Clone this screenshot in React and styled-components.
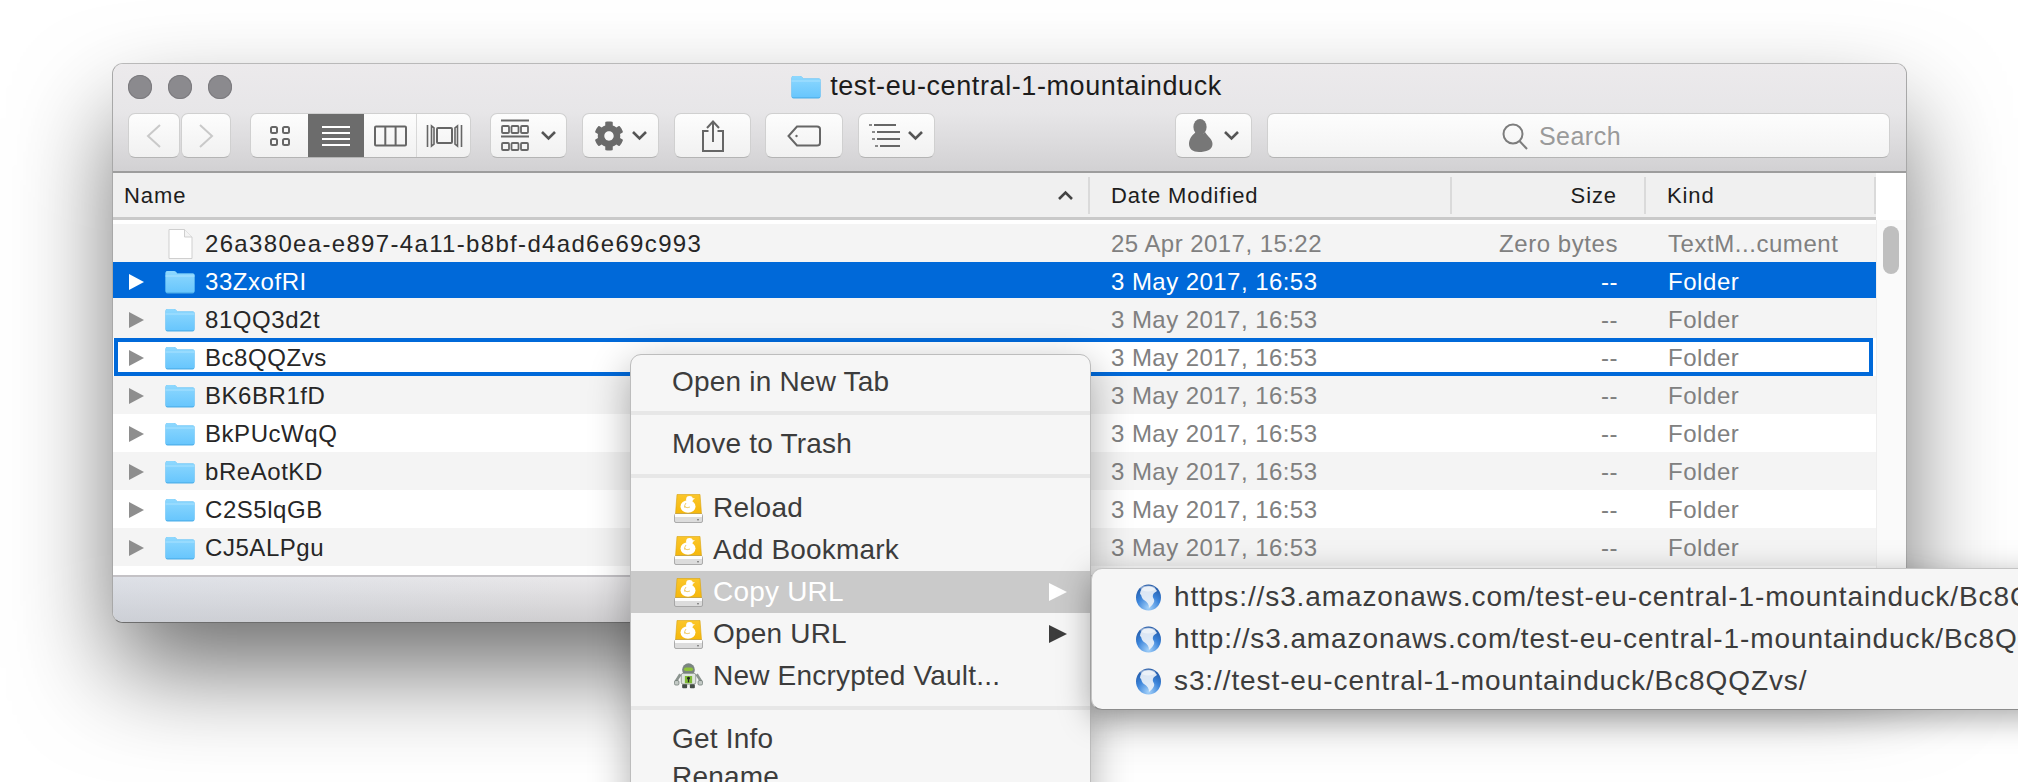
import React from "react";
import styled, { createGlobalStyle } from "styled-components";
import { FaCog } from "react-icons/fa";

const Global = createGlobalStyle`
  html, body { margin: 0; padding: 0; background: #fff; }
  #root { width: 2018px; height: 782px; overflow: hidden; }
`;

const Page = styled.div`
  position: relative; width: 2018px; height: 782px; overflow: hidden;
  padding: 63px 0 0 112px; box-sizing: border-box; background: #fff;
  font-family: "Liberation Sans", Arial, sans-serif;
`;
const Win = styled.div`
  width: 1795px; height: 560px; box-sizing: border-box; display: flex; flex-direction: column;
  border: 1px solid #a8a8a8; border-top-color: #b9b9b9; border-bottom-color: #6d6d6d;
  border-radius: 11px; overflow: hidden; background: #fff;
  box-shadow: 0 50px 100px -5px rgba(0,0,0,.58);
`;
const Chrome = styled.div`
  flex: none; height: 109px; box-sizing: border-box; border-bottom: 2px solid #9d9d9d;
  background: linear-gradient(#eceaec, #e7e6e8 45%, #d2d1d3);
  display: flex; flex-direction: column;
`;
const TitleRow = styled.div`
  height: 49px; flex: none; display: grid; grid-template-columns: 1fr auto 1fr; align-items: center; padding: 0 15px 4px; box-sizing: border-box;
`;
const Lights = styled.div`display: flex; gap: 16px;`;
const Light = styled.span`
  width: 24px; height: 24px; border-radius: 50%; background: #8b8a8e; box-shadow: inset 0 0 0 1px #7c7b7f;
`;
const Title = styled.div`
  display: flex; align-items: center; gap: 9px; font-size: 27px; letter-spacing: .6px; color: #1c1c1c; margin-right: 6px;
`;
const Toolbar = styled.div`display: flex; align-items: stretch; height: 45px; padding: 0 16px 0 15px;`;
const ToolButton = styled.div`
  width: ${p => p.$w}px; margin-left: ${p => p.$ml || 0}px; flex: none; box-sizing: border-box;
  display: flex; align-items: center; justify-content: center; gap: ${p => p.$gap || 0}px;
  background: linear-gradient(#fdfdfd, #f1f1f1); border: 1px solid #d0d0d0; border-bottom-color: #b4b4b4; border-radius: 7px;
`;
const Segmented = styled.div`
  display: flex; width: 221px; margin-left: 19px; flex: none; box-sizing: border-box; overflow: hidden;
  background: linear-gradient(#fdfdfd, #f1f1f1); border: 1px solid #d0d0d0; border-bottom-color: #b4b4b4; border-radius: 7px;
`;
const Segment = styled.div`
  width: ${p => p.$w}px; flex: none; display: flex; align-items: center; justify-content: center; box-sizing: border-box;
  background: ${p => (p.$on ? "#6c6c6c" : "transparent")};
  border-right: ${p => (p.$div ? "1px solid #d8d8d8" : "none")};
`;
const Spacer = styled.div`flex: 1;`;
const Search = styled.div`
  width: 623px; margin-left: 15px; flex: none; box-sizing: border-box; display: flex; align-items: center; justify-content: center; gap: 11px;
  padding-right: 34px; padding-top: 2px;
  background: linear-gradient(#fdfdfd, #f3f3f3); border: 1px solid #d0d0d0; border-bottom-color: #b4b4b4; border-radius: 7px;
  color: #9a9a9a; font-size: 25px; letter-spacing: .5px;
`;
const Body = styled.div`flex: 1; min-height: 0; display: flex; background: #fff;`;
const Table = styled.div`width: 1763px; flex: none; overflow: hidden;`;
const cols = "977px 362px 194px 230px";
const Header = styled.div`
  height: 47px; box-sizing: border-box; display: grid; grid-template-columns: ${cols}; background: #f0f0f0;
  border-bottom: 3px solid #c9c9c9; margin-bottom: 4px; font-size: 22px; letter-spacing: .9px; color: #1d1d1d;
`;
const HeadCell = styled.div`
  display: flex; align-items: center; justify-content: ${p => (p.$right ? "flex-end" : "space-between")};
  padding: ${p => (p.$first ? "0 14px 0 11px" : p.$right ? "0 27px 0 0" : "0 0 0 21px")};
  height: 37px; margin-top: 4px;
  border-right: 2px solid #dadada;
`;
const Row = styled.div`
  position: relative; height: 38px; display: grid; grid-template-columns: ${cols}; align-items: center; box-sizing: border-box;
  padding-top: 2px; font-size: 24px; letter-spacing: .55px;
  background: ${p => (p.$sel ? "#0069d9" : p.$odd ? "#f4f4f4" : "#fff")};
  box-shadow: ${p => (p.$sel ? "inset 0 -2px 0 #f4f4f4" : "none")};
  ${p => p.$focus && `
    &::after {
      content: ""; position: absolute; top: 0; bottom: 0; left: 1px; right: 3px;
      border: 4px solid #0069d9; pointer-events: none;
    }
  `}
`;
const NameCell = styled.div`
  display: flex; align-items: center; padding-left: 16px; color: ${p => (p.$sel ? "#fff" : "#262626")};
  letter-spacing: ${p => (p.$track ? "1.33px" : ".55px")};
`;
const Triangle = styled.span`
  flex: none; width: 0; height: 0; border-style: solid; border-width: 8.5px 0 8.5px 15px;
  border-color: transparent transparent transparent ${p => (p.$sel ? "#fff" : "#8e8e8e")};
  margin-right: 21px;
`;
const IconSlot = styled.span`flex: none; display: flex; width: 30px; margin-right: 10px; justify-content: center;`;
const NoTriangle = styled.span`flex: none; width: 36px;`;
const DateCell = styled.div`padding-left: 21px; letter-spacing: .45px; color: ${p => (p.$sel ? "#fff" : "#808080")};`;
const SizeCell = styled.div`text-align: right; padding-right: 28px; color: ${p => (p.$sel ? "#fff" : "#808080")};`;
const KindCell = styled.div`padding-left: 22px; color: ${p => (p.$sel ? "#fff" : "#808080")};`;
const Track = styled.div`
  flex: 1; margin-top: 47px; background: #fafafa; border-left: 1px solid #eee; display: flex; justify-content: center; padding-top: 6px;
`;
const Thumb = styled.div`width: 16px; height: 48px; border-radius: 8px; background: #bfbfbf; margin-right: 2px;`;
const Footer = styled.div`
  flex: none; height: 47px; border-top: 2px solid #c4c2c6; box-sizing: border-box;
  background: linear-gradient(to right, rgba(200,210,225,.35), rgba(200,205,215,0) 25%), linear-gradient(#e9e8ea, #cfced0);
`;
const Menu = styled.div`
  position: absolute; left: 630px; top: 354px; width: 461px; box-sizing: border-box; height: 470px; background: #f6f6f6;
  border: 1px solid #bdbdbd; border-radius: 11px; padding-top: 6px; color: #3c3c3c;
  font-size: 28px; letter-spacing: .2px;
  box-shadow: 0 12px 40px rgba(0,0,0,.32);
`;
const Item = styled.div`
  height: ${p => p.$h || 42}px; display: flex; align-items: center; padding-left: 41px; position: relative;
  background: ${p => (p.$hot ? "#cacaca" : "transparent")}; color: ${p => (p.$hot ? "#fff" : "inherit")};
`;
const ItemIcon = styled.span`flex: none; display: flex; width: 29px; margin-left: 2px; margin-right: 10px;`;
const Arrow = styled.span`
  margin-left: auto; margin-right: 23px; width: 0; height: 0; border-style: solid; border-width: 9.5px 0 9.5px 18px;
  border-color: transparent transparent transparent ${p => (p.$hot ? "#fff" : "#3c3c3c")};
`;
const Sep = styled.div`height: 4px; background: #e7e7e7; margin: ${p => p.$m || "8px 0"};`;
const Sub = styled.div`
  position: absolute; left: 1091px; top: 568px; width: 1300px; height: 142px; box-sizing: border-box; background: #f6f6f6;
  border: 1px solid #c4c4c4; border-bottom-color: #8c8c8c; border-radius: 11px 0 0 11px; padding-top: 7px; color: #3c3c3c;
  font-size: 28px; letter-spacing: .9px; white-space: nowrap;
  box-shadow: 0 8px 32px rgba(0,0,0,.34);
`;
const SubItem = styled.div`height: 42px; display: flex; align-items: center; padding-left: 43px; gap: 12px;`;
const SubIcon = styled.span`flex: none; display: flex; width: 27px;`;

const FolderIcon = ({ w = 30, h = 24, id }) => (
  <svg width={w} height={h} viewBox="0 0 30 24">
    <defs>
      <linearGradient id={id} x1="0" y1="0" x2="0" y2="1">
        <stop offset="0" stopColor="#8ed8fe" />
        <stop offset="1" stopColor="#68c6fd" />
      </linearGradient>
    </defs>
    <path d="M0.5 3 Q0.5 1 2.5 1 H9 Q10.5 1 11.5 2.5 L12 3.5 H28 Q29.5 3.5 29.5 5 V21.5 Q29.5 23.5 27.5 23.5 H2.5 Q0.5 23.5 0.5 21.5Z" fill="#4fb0ea" />
    <path d="M0.5 3 Q0.5 1 2.5 1 H9 Q10.5 1 11.5 2.5 L12 3.5 H28 Q29.5 3.5 29.5 5 V21 Q29.5 22.3 28 22.3 H2 Q0.5 22.3 0.5 21Z" fill={`url(#${id})`} />
    <path d="M0.5 6 H29.5" stroke="#a9e2ff" strokeWidth="1" />
  </svg>
);
const DocIcon = () => (
  <svg width="25" height="32" viewBox="0 0 25 32">
    <path d="M1 1.5 H16.5 L24 9 V30.5 H1Z" fill="#fff" stroke="#cfcfcf" />
    <path d="M16.5 1.5 V9 H24" fill="#f4f4f4" stroke="#cfcfcf" />
  </svg>
);
const Chev = ({ up }) => (
  <svg width="17" height="11" viewBox="0 0 17 11">
    <path d={up ? "M2 9 L8.5 2.5 L15 9" : "M2 2 L8.5 8.5 L15 2"} fill="none" stroke={up ? "#444" : "#555"} strokeWidth="2.6" />
  </svg>
);
const NavChev = ({ dir }) => (
  <svg width="16" height="24" viewBox="0 0 16 24">
    <path d={dir === "l" ? "M14 1 L2 12 L14 23" : "M2 1 L14 12 L2 23"} fill="none" stroke="#c9c9c9" strokeWidth="2" />
  </svg>
);
const IconGrid = () => (
  <svg width="22" height="22" viewBox="0 0 22 22" fill="none" stroke="#666" strokeWidth="2">
    <rect x="2" y="2" width="6" height="6" rx="1.5" /><rect x="14" y="2" width="6" height="6" rx="1.5" />
    <rect x="2" y="14" width="6" height="6" rx="1.5" /><rect x="14" y="14" width="6" height="6" rx="1.5" />
  </svg>
);
const IconList = () => (
  <svg width="30" height="22" viewBox="0 0 30 22" stroke="#fff" strokeWidth="2.2">
    <path d="M1 2 H29 M1 8 H29 M1 14 H29 M1 20 H29" />
  </svg>
);
const IconColumns = () => (
  <svg width="33" height="22" viewBox="0 0 33 22" fill="none" stroke="#666" strokeWidth="2">
    <rect x="1" y="1.5" width="31" height="19" rx="1" /><path d="M11.3 1.5 V20.5 M21.6 1.5 V20.5" />
  </svg>
);
const IconFlow = () => (
  <svg width="37" height="24" viewBox="0 0 37 24" fill="none" stroke="#666" strokeWidth="1.6">
    <rect x="11" y="4" width="15" height="15" rx="1" strokeWidth="2" />
    <path d="M1.5 1 V23 M5.5 2 V22 L8 20 V4Z M35.5 1 V23 M31.5 2 V22 L29 20 V4Z" />
  </svg>
);
const IconArrange = () => (
  <svg width="30" height="34" viewBox="0 0 30 34" fill="none" stroke="#666">
    <path d="M1 1.5 H29 M1 17.5 H29" strokeWidth="2" />
    <g strokeWidth="1.8"><rect x="2" y="7" width="7" height="7" rx="1" /><rect x="11.5" y="7" width="7" height="7" rx="1" /><rect x="21" y="7" width="7" height="7" rx="1" />
    <rect x="2" y="24" width="7" height="7" rx="1" /><rect x="11.5" y="24" width="7" height="7" rx="1" /><rect x="21" y="24" width="7" height="7" rx="1" /></g>
  </svg>
);
const IconShare = () => (
  <svg width="24" height="32" viewBox="0 0 24 32" fill="none" stroke="#666" strokeWidth="2">
    <path d="M7.5 11 H2 V31 H22 V11 H16.5" /><path d="M12 22 V2 M6 8 L12 1.5 L18 8" />
  </svg>
);
const IconTag = () => (
  <svg width="34" height="22" viewBox="0 0 34 22" fill="none" stroke="#666" strokeWidth="2">
    <path d="M10 1.5 H30 Q33 1.5 33 4 V18 Q33 20.5 30 20.5 H10 L1.5 11Z" /><circle cx="9.5" cy="11" r="1.2" fill="#666" stroke="none" />
  </svg>
);
const IconOutline = () => (
  <svg width="32" height="26" viewBox="0 0 32 26" stroke="#666" strokeWidth="2">
    <path d="M5 2 H27 M8 9 H31 M8 16 H31 M11 23 H31" /><path d="M0 2 H3 M3 9 H6 M3 16 H6 M6 23 H9" strokeWidth="1.5" />
  </svg>
);
const IconPerson = () => (
  <svg width="25" height="33" viewBox="0 0 25 33" fill="#777">
    <ellipse cx="12" cy="8" rx="6.6" ry="8" />
    <path d="M8 13 C4 16 1 20 1 25 C1 30 5 33 11 33 C18 33 24.5 31 24.5 25 C24.5 20 20 18 17 13 C15 16 10 16 8 13Z" />
  </svg>
);
const IconSearch = () => (
  <svg width="26" height="27" viewBox="0 0 26 27" fill="none" stroke="#7d7d7d" strokeWidth="2">
    <circle cx="11" cy="11" r="9.5" /><path d="M17.5 18 L25 26" />
  </svg>
);
const DuckDrive = ({ id }) => (
  <svg width="29" height="29" viewBox="0 0 29 29">
    <defs>
      <linearGradient id={id} x1="0" y1="0" x2="0" y2="1"><stop offset="0" stopColor="#fbc62a" /><stop offset="1" stopColor="#f5b70b" /></linearGradient>
    </defs>
    <path d="M3 0.5 H26 L27.5 20 H1.5Z" fill={`url(#${id})`} stroke="#d9a20f" strokeWidth=".6" />
    <rect x="0.5" y="20" width="28" height="8.5" rx="1.5" fill="#dcdcdc" stroke="#9a9a9a" strokeWidth=".8" />
    <rect x="1" y="20" width="27" height="3" fill="#fdfdfd" />
    <rect x="23" y="25" width="2" height="1.4" fill="#8a8a8a" />
    <circle cx="15.5" cy="5.5" r="3.4" fill="#fff" />
    <ellipse cx="14" cy="12.5" rx="7.5" ry="6.2" fill="#fff" />
    <path d="M10 12 q3 3 6 1 M12 9 q-2 2 -1 5" fill="none" stroke="#efc75a" strokeWidth=".9" />
    <path d="M18 4.5 L21 4 L18.5 6.5Z" fill="#fff" />
  </svg>
);
const Robot = () => (
  <svg width="32" height="28" viewBox="0 0 32 28">
    <circle cx="16" cy="7" r="7" fill="#7b8580" />
    <rect x="11" y="4.5" width="10" height="4" rx="2" fill="#8fc43a" />
    <rect x="8" y="11" width="16" height="12" rx="2" fill="#dfe5de" stroke="#6b746e" strokeWidth=".7" />
    <path d="M12 14 h8 v8 h-8z" fill="#7fbb35" />
    <circle cx="16" cy="16.5" r="1.6" fill="#222" /><rect x="15.3" y="16.5" width="1.4" height="4.5" fill="#222" />
    <path d="M7 12 L2 20 M25 12 L30 20" stroke="#8b948f" strokeWidth="3" />
    <rect x="0.5" y="19" width="5" height="5" rx="1.5" fill="#c3c9c5" stroke="#5e6a64" strokeWidth=".7" />
    <rect x="26.5" y="19" width="5" height="5" rx="1.5" fill="#c3c9c5" stroke="#5e6a64" strokeWidth=".7" />
    <rect x="9" y="23" width="5.5" height="4.5" rx="1" fill="#454d48" /><rect x="17.5" y="23" width="5.5" height="4.5" rx="1" fill="#454d48" />
  </svg>
);
const Globe = ({ id }) => (
  <svg width="27" height="27" viewBox="0 0 27 27">
    <defs>
      <radialGradient id={id} cx=".5" cy=".9" r=".95">
        <stop offset="0" stopColor="#a5d2fa" /><stop offset=".5" stopColor="#3b84da" /><stop offset="1" stopColor="#1c4f9c" />
      </radialGradient>
    </defs>
    <ellipse cx="13.5" cy="13.5" rx="12.5" ry="13" fill={`url(#${id})`} />
    <path d="M9 3 C14 1 20 3 22 7 C20 9 19 8 18 11 C17 14 20 15 19 18 C18 21 15 23 14 24 C14 20 12 18 9 16 C6 14 7 11 5 10 C5 7 7 4 9 3Z" fill="#eef3f8" opacity=".9" />
    <ellipse cx="13" cy="4.4" rx="7.5" ry="3" fill="#fff" opacity=".45" />
  </svg>
);

const rows = [
  { name: "26a380ea-e897-4a11-b8bf-d4ad6e69c993", date: "25 Apr 2017, 15:22", size: "Zero bytes", kind: "TextM...cument", doc: true, odd: true },
  { name: "33ZxofRI", sel: true },
  { name: "81QQ3d2t", odd: true },
  { name: "Bc8QQZvs", focus: true },
  { name: "BK6BR1fD", odd: true },
  { name: "BkPUcWqQ" },
  { name: "bReAotKD", odd: true },
  { name: "C2S5lqGB" },
  { name: "CJ5ALPgu", odd: true },
  { name: "", blank: true },
];

export default function App() {
  return (
    <Page>
      <Global />
      <Win>
        <Chrome>
          <TitleRow>
            <Lights><Light /><Light /><Light /></Lights>
            <Title><FolderIcon id="titleFolder" />test-eu-central-1-mountainduck</Title>
            <span />
          </TitleRow>
          <Toolbar>
            <ToolButton $w={52}><NavChev dir="l" /></ToolButton>
            <ToolButton $w={50} $ml={1}><NavChev dir="r" /></ToolButton>
            <Segmented>
              <Segment $w={57}><IconGrid /></Segment>
              <Segment $w={56} $on><IconList /></Segment>
              <Segment $w={53} $div><IconColumns /></Segment>
              <Segment $w={54}><IconFlow /></Segment>
            </Segmented>
            <ToolButton $w={77} $ml={19} $gap={10}><IconArrange /><Chev /></ToolButton>
            <ToolButton $w={77} $ml={15} $gap={7}><FaCog size={30} color="#6a6a6a" /><Chev /></ToolButton>
            <ToolButton $w={77} $ml={15}><IconShare /></ToolButton>
            <ToolButton $w={78} $ml={14}><IconTag /></ToolButton>
            <ToolButton $w={77} $ml={15} $gap={6}><IconOutline /><Chev /></ToolButton>
            <Spacer />
            <ToolButton $w={77} $gap={10}><IconPerson /><Chev /></ToolButton>
            <Search><IconSearch />Search</Search>
          </Toolbar>
        </Chrome>
        <Body>
          <Table>
            <Header>
              <HeadCell $first><span>Name</span><Chev up /></HeadCell>
              <HeadCell>Date Modified</HeadCell>
              <HeadCell $right>Size</HeadCell>
              <HeadCell>Kind</HeadCell>
            </Header>
            {rows.map((r, i) => (
              <Row key={i} $odd={r.odd} $sel={r.sel} $focus={r.focus}>
                <NameCell $sel={r.sel} $track={r.doc}>
                  {r.doc ? <NoTriangle /> : <Triangle $sel={r.sel} />}
                  <IconSlot>{r.doc ? <DocIcon /> : <FolderIcon id={`f${i}`} />}</IconSlot>
                  {r.name}
                </NameCell>
                {!r.blank && <DateCell $sel={r.sel}>{r.date || "3 May 2017, 16:53"}</DateCell>}
                {!r.blank && <SizeCell $sel={r.sel}>{r.size || "--"}</SizeCell>}
                {!r.blank && <KindCell $sel={r.sel}>{r.kind || "Folder"}</KindCell>}
              </Row>
            ))}
          </Table>
          <Track><Thumb /></Track>
        </Body>
        <Footer />
      </Win>
      <Menu>
        <Item>Open in New Tab</Item>
        <Sep />
        <Item>Move to Trash</Item>
        <Sep $m="9px 0 9px" />
        <Item><ItemIcon><DuckDrive id="d1" /></ItemIcon>Reload</Item>
        <Item><ItemIcon><DuckDrive id="d2" /></ItemIcon>Add Bookmark</Item>
        <Item $hot><ItemIcon><DuckDrive id="d3" /></ItemIcon>Copy URL<Arrow $hot /></Item>
        <Item><ItemIcon><DuckDrive id="d4" /></ItemIcon>Open URL<Arrow /></Item>
        <Item><ItemIcon><Robot /></ItemIcon>New Encrypted Vault...</Item>
        <Sep $m="9px 0 10px" />
        <Item $h={38}>Get Info</Item>
        <Item $h={38}>Rename</Item>
      </Menu>
      <Sub>
        <SubItem><SubIcon><Globe id="g1" /></SubIcon>https://s3.amazonaws.com/test-eu-central-1-mountainduck/Bc8QQZvs/</SubItem>
        <SubItem><SubIcon><Globe id="g2" /></SubIcon>http://s3.amazonaws.com/test-eu-central-1-mountainduck/Bc8QQZvs/</SubItem>
        <SubItem><SubIcon><Globe id="g3" /></SubIcon>s3://test-eu-central-1-mountainduck/Bc8QQZvs/</SubItem>
      </Sub>
    </Page>
  );
}
